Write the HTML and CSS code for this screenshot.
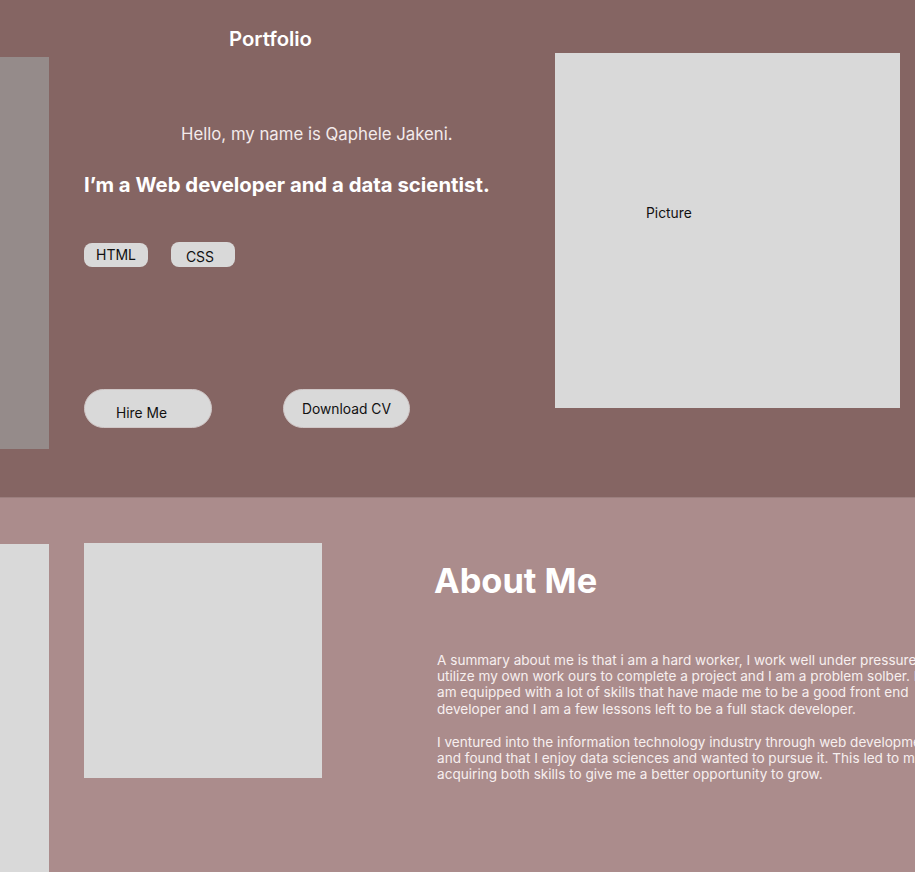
FILE: index.html
```html
<!DOCTYPE html>
<html lang="en">
<head>
<meta charset="utf-8">
<title>Portfolio</title>
<link rel="stylesheet" href="styles.css">
</head>
<body>
<section class="hero">
  <div class="side-bar"></div>
  <div class="intro">
    <h1 class="brand">Portfolio</h1>
    <p class="hello">Hello, my name is Qaphele Jakeni.</p>
    <h2 class="role">I’m a Web developer and a data scientist.</h2>
    <div class="tags">
      <span class="tag tag-html">HTML</span>
      <span class="tag tag-css">CSS</span>
    </div>
    <div class="actions">
      <button class="btn btn-hire">Hire Me</button>
      <button class="btn btn-cv">Download CV</button>
    </div>
  </div>
  <div class="picture"><span class="picture-label">Picture</span></div>
</section>
<section class="about">
  <div class="side-block"></div>
  <div class="about-photo"></div>
  <div class="about-text">
    <h2 class="about-title">About Me</h2>
    <p>A summary about me is that i am a hard worker, I work well under pressure, I<br>utilize my own work ours to complete a project and I am a problem solber. I<br>am equipped with a lot of skills that have made me to be a good front end<br>developer and I am a few lessons left to be a full stack developer.</p>
    <p>I ventured into the information technology industry through web development<br>and found that I enjoy data sciences and wanted to pursue it. This led to me<br>acquiring both skills to give me a better opportunity to grow.</p>
  </div>
</section>
</body>
</html>
```

FILE: styles.css
```css
html, body {
  margin: 0;
  padding: 0;
}
body {
  width: 915px;
  height: 872px;
  overflow: hidden;
  font-family: Inter, "Noto Sans", sans-serif;
  background: #ab8c8c;
}
.hero {
  height: 497px;
  background: #856563;
  display: flex;
  align-items: flex-start;
  border-bottom: 1px solid #9b7f7e;
}
.side-bar {
  width: 49px;
  height: 392px;
  margin-top: 57px;
  background: #958b8a;
  flex: none;
}
.intro {
  margin-left: 35px;
  width: 436px;
  flex: none;
  display: flex;
  flex-direction: column;
  align-items: flex-start;
}
.brand {
  margin: 27px 0 0 145px;
  font-size: 20.3px;
  line-height: 24px;
  font-weight: 600;
  color: #ffffff;
}
.hello {
  margin: 73px 0 0 97px;
  font-size: 16.75px;
  line-height: 20px;
  font-weight: 400;
  color: #f3ebeb;
}
.role {
  margin: 29px 0 0 0;
  font-size: 20.35px;
  line-height: 24px;
  font-weight: 700;
  color: #ffffff;
  white-space: nowrap;
}
.tags {
  margin-top: 45px;
  display: flex;
  gap: 23px;
  align-items: flex-start;
}
.tag {
  width: 64px;
  height: 25px;
  box-sizing: border-box;
  background: #d9d9d9;
  border-radius: 8px;
  font-size: 14px;
  line-height: 17px;
  color: #111;
  text-align: center;
}
.tag-html {
  margin-top: 1px;
  height: 24px;
  padding: 3px 0 0 0;
}
.tag-css {
  padding: 6px 6px 0 0;
}
.actions {
  margin-top: 122px;
  display: flex;
  gap: 71px;
}
.btn {
  height: 39px;
  border: 1px solid #cfc6c6;
  border-radius: 20px;
  background: #d9d9d9;
  font-family: Inter, "Noto Sans", sans-serif;
  font-size: 13.8px;
  color: #111;
  padding: 0;
}
.btn-hire {
  width: 128px;
  padding-top: 8px;
  padding-right: 13px;
}
.btn-cv {
  width: 127px;
  padding-bottom: 0;
}
.picture {
  margin: 53px 15px 0 auto;
  width: 345px;
  height: 355px;
  background: #d9d9d9;
  flex: none;
  display: flex;
  align-items: flex-start;
}
.picture-label {
  margin: 152px 0 0 91px;
  font-size: 13.8px;
  line-height: 17px;
  color: #111;
}
.about {
  display: flex;
  align-items: flex-start;
  height: 374px;
}
.side-block {
  width: 49px;
  height: 330px;
  margin-top: 46px;
  background: #d9d9d9;
  flex: none;
}
.about-photo {
  margin: 45px 0 0 35px;
  width: 238px;
  height: 235px;
  background: #d9d9d9;
  flex: none;
}
.about-text {
  margin-left: 112px;
  width: 520px;
  flex: none;
}
.about-title {
  margin: 62px 0 0 0;
  font-size: 34.4px;
  line-height: 42px;
  font-weight: 700;
  color: #ffffff;
}
.about-text p {
  margin: 50px 0 0 3px;
  font-size: 13.6px;
  line-height: 16.2px;
  color: #f7efef;
  white-space: nowrap;
}
.about-text p + p {
  margin-top: 17px;
}
```
